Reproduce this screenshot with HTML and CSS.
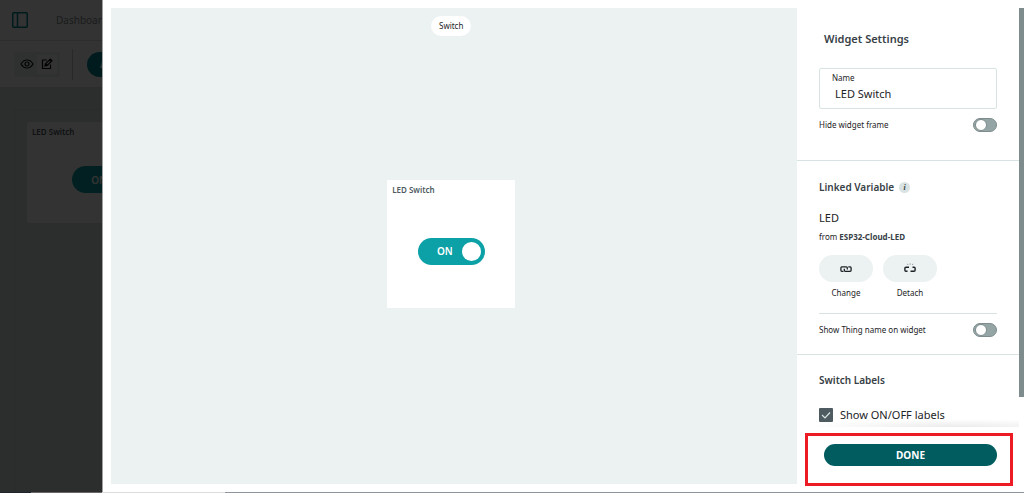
FILE: index.html
```html
<!DOCTYPE html>
<html lang="en">
  <head>
    <meta charset="UTF-8" />
    <meta name="viewport" content="width=device-width, initial-scale=1.0" />
    <title>Widget Settings</title>
    <link rel="stylesheet" href="styles.css">
  </head>
  <body>
    <div class="page">
      <header class="page-header">
        <svg class="logo" viewBox="0 0 16 16" fill="none" stroke="#00878f" stroke-width="1.5">
          <rect x="0.75" y="0.75" width="14.5" height="14.5" rx="1" />
          <path d="M5.5 1v14" />
        </svg>
        <a class="crumb" href="#">Dashboards</a>
      </header>
      <div class="toolbar">
        <div class="mode-group">
          <button class="mode-button" aria-label="View">
            <svg width="14" height="10" viewBox="0 0 14 10" fill="none" stroke="#111" stroke-width="1.2">
              <path d="M1 5c1.4-2.500 3.500-4 6-4s4.600 1.500 6 4c-1.400 2.500-3.500 4-6 4S2.400 7.500 1 5z" />
              <circle cx="7" cy="5" r="2" />
            </svg>
          </button>
          <button class="mode-button active" aria-label="Edit">
            <svg width="12" height="12" viewBox="0 0 12 12" fill="none" stroke="#111" stroke-width="1.2">
              <path d="M6 2H1.500v8.500h8V6.500" />
              <path d="M4 8l.5-2.200L9.300 1l1.700 1.700-4.800 4.800zM5 6l1.500 1.500M8.500 2l1.500 1.500" />
            </svg>
          </button>
        </div>
        <button class="add-button">ADD</button>
      </div>
      <div class="board">
        <div class="board-frame">
          <div class="board-widget">
            <h3 class="widget-name">LED Switch</h3>
            <label class="switch">
              ON
              <input type="checkbox" class="switch-knob" checked />
            </label>
          </div>
        </div>
      </div>
    </div>
    <div class="overlay"></div>

    <div class="drawer" role="dialog" aria-label="Widget Settings">
      <main class="stage">
        <div class="badge">Switch</div>
        <div class="widget">
          <h3 class="widget-name">LED Switch</h3>
          <label class="switch">
            ON
            <input type="checkbox" class="switch-knob" checked />
          </label>
        </div>
      </main>

      <aside class="settings">
        <div class="settings-body">
          <h2 class="settings-title">Widget Settings</h2>

          <section class="section section-name">
            <div class="field">
              <label for="name">Name</label>
              <input type="text" id="name" value="LED Switch" />
            </div>
            <div class="row">
              <label for="hideFrame">Hide widget frame</label>
              <input type="checkbox" class="toggle" id="hideFrame" />
            </div>
          </section>

          <section class="section section-variable">
            <h3 class="section-title">
              Linked Variable
              <span class="info">i</span>
            </h3>
            <p class="variable">LED</p>
            <p class="from">from <b>ESP32-Cloud-LED</b></p>
            <div class="actions">
              <button class="action">
                <span class="action-icon">
                  <svg width="12" height="8" viewBox="0 0 12 8" fill="none" stroke="#1c2326" stroke-width="1.3">
                    <path d="M7.300 4.500V2.800Q7.300 1.900 6.300 1.900H1.900Q0.900 1.900 0.900 2.900V5.300Q0.900 6.300 1.900 6.300H3.500" />
                    <path d="M4.300 3.800V5.300Q4.300 6.300 5.300 6.300H10.100Q11.100 6.300 11.100 5.300V2.900Q11.100 1.900 10.100 1.900H8.300" />
                  </svg>
                </span>
                Change
              </button>
              <button class="action">
                <span class="action-icon">
                  <svg width="12" height="12" viewBox="0 0 12 12" fill="none" stroke="#1c2326" stroke-width="1.4">
                    <path d="M5 4.300H2Q0.900 4.300 0.900 5.300V7.300Q0.900 8.300 2 8.300H3.500" />
                    <path d="M8.500 4.300H10Q11.100 4.300 11.100 5.300V7.300Q11.100 8.300 10 8.300H6.500" />
                    <path d="M3.500 0.800l.6 1.200M6.200 0.300v1.400M9 0.800l-.6 1.200" stroke-width="0.700" stroke="#6f7a7d" />
                  </svg>
                </span>
                Detach
              </button>
            </div>
            <div class="row row-thing">
              <label for="thingName">Show Thing name on widget</label>
              <input type="checkbox" class="toggle" id="thingName" />
            </div>
          </section>

          <section class="section section-labels">
            <h3 class="section-title">Switch Labels</h3>
            <div class="check">
              <input type="checkbox" id="showLabels" checked />
              <svg class="check-mark" viewBox="0 0 14 14" fill="none" stroke="#dae3e3" stroke-width="1.2">
                <path d="M3 7l3 3 5-5.500" />
              </svg>
              <label for="showLabels">Show ON/OFF labels</label>
            </div>
          </section>
        </div>

        <footer class="settings-footer">
          <button class="done">DONE</button>
          <div class="highlight"></div>
        </footer>
        <div class="scrollbar"></div>
      </aside>
    </div>
    <div class="taskbar"></div>
  </body>
</html>
```

FILE: styles.css
```css
* {
  margin: 0;
  padding: 0;
  box-sizing: border-box;
}

body {
  font-family: "Noto Sans", "Open Sans", sans-serif;
  font-size: 8px;
  line-height: 12px;
  color: #1c2326;
  overflow: hidden;
}

button,
input {
  font: inherit;
  color: inherit;
  border: none;
  background: none;
}

button,
label {
  cursor: pointer;
}

svg {
  display: block;
}

/* dashboard behind the drawer */
.page {
  display: flex;
  flex-direction: column;
  height: 100vh;
  background-color: #fff;
}

.page-header {
  display: flex;
  align-items: center;
  gap: 28px;
  height: 41px;
  padding: 0 12px;
  border-bottom: 1px solid #dae3e3;
}

.logo {
  width: 16px;
  height: 16px;
}

.crumb {
  font-size: 10px;
  color: #7f8c8d;
  text-decoration: none;
}

.toolbar {
  display: flex;
  align-items: center;
  height: 46px;
  padding: 0 14px;
}

.mode-group {
  display: flex;
  padding: 3px;
  background-color: #ecf1f1;
  border-radius: 3px;
}

.mode-button {
  display: flex;
  align-items: center;
  justify-content: center;
  width: 20px;
  height: 19px;
}

.mode-button.active {
  background-color: #fff;
}

.add-button {
  position: relative;
  height: 25px;
  margin-left: 27px;
  padding: 0 13px;
  border-radius: 13px;
  background-color: #00878f;
  color: #fff;
  font-size: 10px;
  font-weight: bold;
}

.add-button::before {
  content: "";
  position: absolute;
  left: -15px;
  top: -3px;
  height: 31px;
  border-left: 1px solid #c9d2d2;
}

.board {
  flex: 1;
  padding: 22px 15px 0;
  background-color: #dae3e3;
}

.board-frame {
  height: 100%;
  padding: 12px 11px;
  border: 1px solid #cfd9d9;
}

.board-widget {
  display: flex;
  flex-direction: column;
  width: 157px;
  height: 101px;
  padding: 4px 5px 2px;
  border-radius: 3px;
  background-color: #fff;
}

.overlay {
  position: fixed;
  inset: 0;
  background-color: rgba(0, 0, 0, 0.8);
}

/* drawer */
.drawer {
  position: fixed;
  top: 0;
  right: 0;
  bottom: 1px;
  left: 10%;
  display: flex;
  border-left: 1px solid #a0a0a0;
  background-color: #fff;
}

.stage {
  flex: 1;
  display: grid;
  grid-template-rows: 1fr auto 1fr;
  justify-items: center;
  margin: 8px 0 8px 8px;
  padding: 8px 6px 12px 0;
  background-color: #ecf1f1;
}

.badge {
  align-self: start;
  padding: 4px 8px;
  border-radius: 10px;
  background-color: #fff;
}

.widget {
  display: flex;
  flex-direction: column;
  width: 128px;
  height: 128px;
  padding: 4px 5px 2px;
  background-color: #fff;
}

.widget-name {
  font-size: 8px;
  font-weight: 600;
  color: #4e5b61;
}

.switch {
  display: flex;
  align-items: center;
  justify-content: flex-end;
  gap: 9px;
  width: 67px;
  height: 27px;
  margin: auto;
  padding: 0 4px;
  border-radius: 14px;
  background-color: #0ca1a6;
  color: #fff;
  font-size: 10px;
  font-weight: 600;
}

.switch-knob {
  appearance: none;
  width: 19px;
  height: 19px;
  border-radius: 50%;
  background-color: #fff;
}

.settings {
  position: relative;
  display: flex;
  flex-direction: column;
  width: 227px;
  padding-right: 5px;
}

.settings-body {
  flex: 1;
  min-height: 0;
  overflow: hidden;
}

.settings-title {
  padding: 31px 27px 0;
  font-size: 11px;
  font-weight: 600;
  line-height: 16px;
  color: #374146;
}

.section {
  padding: 0 22px;
  border-bottom: 1px solid #dae3e3;
}

.section-name {
  padding-top: 21px;
  padding-bottom: 28px;
}

.field {
  height: 41px;
  padding: 3px 12px;
  border: 1px solid #dae3e3;
  border-radius: 2px;
}

.field label {
  display: block;
}

.field input {
  display: block;
  width: 100%;
  padding-left: 3px;
  font-size: 11px;
  line-height: 16px;
  height: 18px;
}

.row {
  display: flex;
  align-items: center;
  justify-content: space-between;
}

.section-name .row {
  margin-top: 9px;
}

.toggle {
  appearance: none;
  display: flex;
  align-items: center;
  width: 24px;
  height: 14px;
  padding: 0 1px;
  border: 1px solid #7f8c8d;
  border-radius: 7px;
  background-color: #95a5a6;
}

.toggle::before {
  content: "";
  width: 10px;
  height: 10px;
  border: 1px solid #7f8c8d;
  border-radius: 50%;
  background-color: #fff;
}

.section-variable {
  padding-top: 18px;
  padding-bottom: 17px;
}

.section-title {
  display: flex;
  align-items: center;
  gap: 5px;
  font-size: 10px;
  font-weight: 600;
  line-height: 16px;
  color: #374146;
}

.info {
  width: 11px;
  height: 11px;
  border-radius: 50%;
  background-color: #dae3e3;
  font-family: "Liberation Serif", serif;
  font-size: 8px;
  font-style: italic;
  line-height: 11px;
  text-align: center;
}

.variable {
  margin-top: 15px;
  font-size: 11px;
  line-height: 16px;
}

.from {
  margin-top: 5px;
}

.from b {
  color: #374146;
}

.actions {
  display: flex;
  gap: 10px;
  margin-top: 12px;
}

.action {
  width: 54px;
}

.action-icon {
  display: flex;
  align-items: center;
  justify-content: center;
  height: 27px;
  margin-bottom: 5px;
  border-radius: 14px;
  background-color: #ecf1f1;
}

.row-thing {
  margin-top: 14px;
  padding-top: 9px;
  border-top: 1px solid #dae3e3;
}

.section-labels {
  padding-top: 17px;
  border-bottom: none;
}

.check {
  position: relative;
  display: flex;
  align-items: center;
  gap: 7px;
  margin-top: 19px;
  font-size: 11px;
  line-height: 16px;
}

.check input {
  appearance: none;
  width: 14px;
  height: 14px;
  border-radius: 1px;
  background-color: #4e5b61;
}

.check-mark {
  position: absolute;
  left: 0;
  top: 1px;
  width: 14px;
  height: 14px;
  pointer-events: none;
}

.settings-footer {
  position: relative;
  padding: 17px 22px 26px 27px;
  background-color: #fff;
}

.settings-footer::before {
  content: "";
  position: absolute;
  left: 8px;
  right: 0;
  bottom: 100%;
  height: 8px;
  background: radial-gradient(ellipse at 70% 100%, rgba(0, 0, 0, 0.08), transparent 70%);
}

.done {
  display: block;
  width: 100%;
  height: 22px;
  border-radius: 11px;
  background-color: #005c5f;
  color: #fff;
  font-size: 10px;
  font-weight: bold;
}

.highlight {
  position: absolute;
  top: 6px;
  right: 6px;
  bottom: 6px;
  left: 8px;
  border: 3px solid #ed1c24;
  pointer-events: none;
}

.scrollbar {
  position: absolute;
  top: 8px;
  right: 0;
  width: 5px;
  height: 79%;
  background-color: #7f8c8d;
}

.taskbar {
  position: fixed;
  right: 0;
  bottom: 0;
  left: 0;
  height: 1px;
  background: linear-gradient(to right, #1d2530 3%, #6b6666 3% 10%, #dcdcdc 10% 22%, #8e979f 22%);
}
```
